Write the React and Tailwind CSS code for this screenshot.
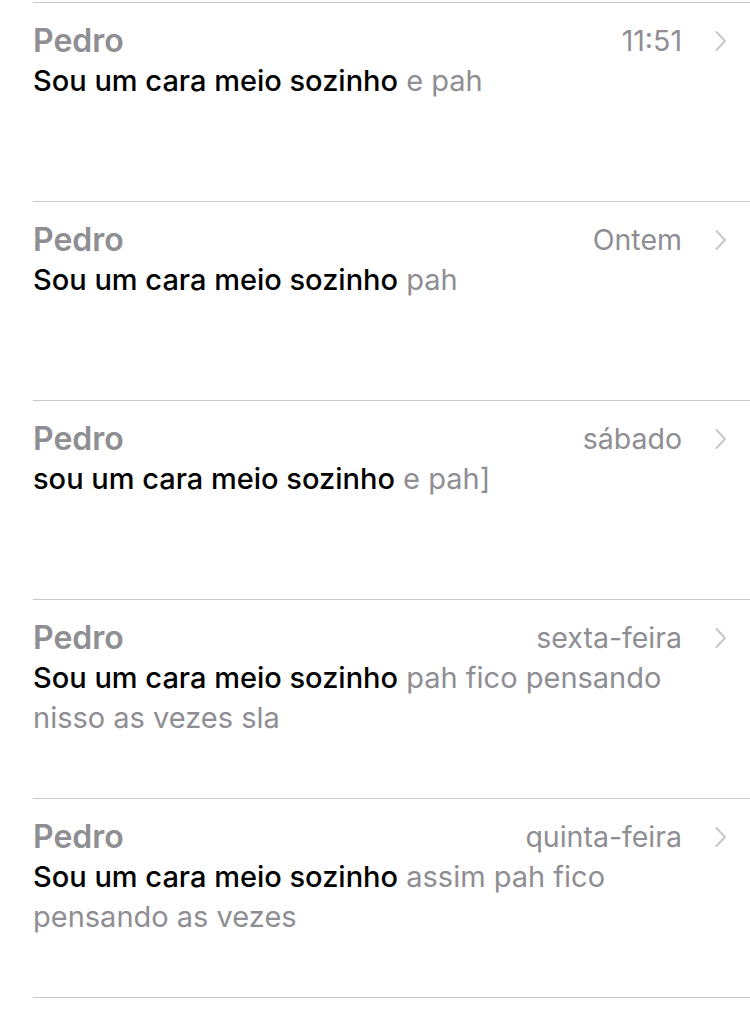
import React from "react";

const messages = [
  { name: "Pedro", when: "11:51", lead: "Sou um cara meio sozinho", rest: " e pah" },
  { name: "Pedro", when: "Ontem", lead: "Sou um cara meio sozinho", rest: " pah" },
  { name: "Pedro", when: "sábado", lead: "sou um cara meio sozinho", rest: " e pah]" },
  { name: "Pedro", when: "sexta-feira", lead: "Sou um cara meio sozinho", rest: " pah fico pensando nisso as vezes sla" },
  { name: "Pedro", when: "quinta-feira", lead: "Sou um cara meio sozinho", rest: " assim pah fico pensando as vezes" },
];

const Chevron = () => (
  <svg width="14" height="22" viewBox="0 0 14 22" className="shrink-0">
    <path d="M2.5 2 L11 11 L2.5 20" fill="none" stroke="#c7c7cc" strokeWidth="2" strokeLinecap="round" strokeLinejoin="round" />
  </svg>
);

const Row = ({ msg }) => (
  <div className="h-[199px] border-t border-[#c8c8cc] pt-[18px] pr-[22px]">
    <div className="flex items-center">
      <div className="flex-1 text-[32px] leading-[40px] font-semibold text-[#8e8e93]">{msg.name}</div>
      <div className="text-[28.5px] leading-[40px] text-[#8e8e93] mr-[32px]">{msg.when}</div>
      <Chevron />
    </div>
    <p className="text-[29px] leading-[40px] text-[#8e8e93] pr-[28px]">
      <span className="font-medium text-black">{msg.lead}</span>
      {msg.rest}
    </p>
  </div>
);

export default function App() {
  return (
    <div className="w-[750px] h-[1018px] bg-white pt-[2px] pl-[33px] overflow-hidden" style={{ fontFamily: "Inter, 'Noto Sans', sans-serif" }}>
      {messages.map((m, i) => (
        <Row key={i} msg={m} />
      ))}
      <div className="border-t border-[#c8c8cc]" />
    </div>
  );
}
